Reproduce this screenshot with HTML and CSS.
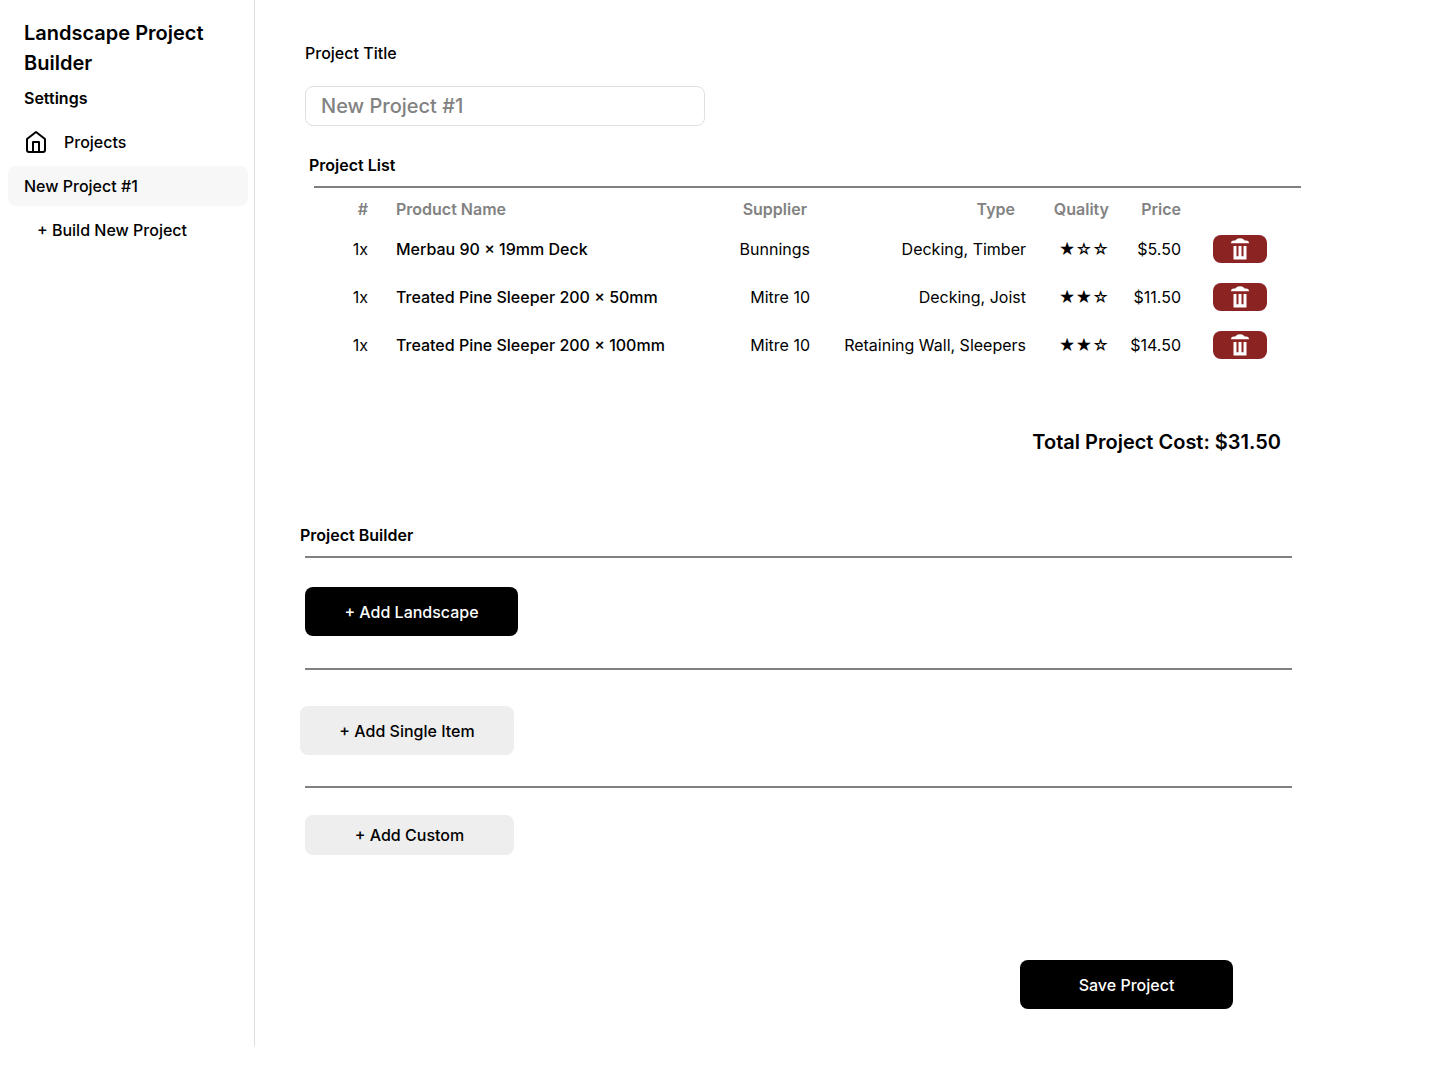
FILE: index.html
```html
<!DOCTYPE html>
<html lang="en">
<head>
<meta charset="utf-8">
<meta name="viewport" content="width=device-width, initial-scale=1">
<title>Landscape Project Builder</title>
<link rel="stylesheet" href="styles.css">
</head>
<body>
<svg class="sprite" aria-hidden="true">
  <symbol id="trash" viewBox="0 0 18 22">
    <path d="M0 5.200Q0 2.400 3 2.400H4.400Q5.600 0.300 9 0.300T13.600 2.400H15Q18 2.400 18 5.200Z"/>
    <path d="M2.500 8H5.500V18.200H7.500V8H10.500V18.200H12.500V8H15.500V21.500H2.500Z"/>
  </symbol>
</svg>
<div class="app">
  <nav class="sidebar">
    <h1 class="brand">Landscape Project Builder</h1>
    <h2 class="sidebar-heading">Settings</h2>
    <ul class="nav">
      <li><a class="nav-link" href="#projects">
        <svg class="nav-icon" viewBox="0 0 24 24" aria-hidden="true">
          <path d="M3 9l9-7 9 7v11a2 2 0 0 1-2 2H5a2 2 0 0 1-2-2z"/>
          <path d="M9 22V12h6v10"/>
        </svg>
        Projects</a></li>
      <li><a class="nav-link nav-link-active" href="#new-project">New Project #1</a></li>
      <li><a class="nav-link nav-link-nested" href="#build">+ Build New Project</a></li>
    </ul>
  </nav>

  <main class="main">
    <div class="field">
      <label class="field-label" for="title">Project Title</label>
      <input class="field-input" id="title" type="text" placeholder="New Project #1">
    </div>

    <section class="list">
      <h2 class="section-heading">Project List</h2>
      <div class="list-body">
        <table class="products">
          <colgroup>
            <col class="col-count"><col class="col-name"><col class="col-supplier"><col class="col-type"><col class="col-quality"><col class="col-price"><col class="col-action">
          </colgroup>
          <thead>
            <tr>
              <th scope="col">#</th>
              <th scope="col" class="name">Product Name</th>
              <th scope="col" class="head-supplier">Supplier</th>
              <th scope="col" class="head-type">Type</th>
              <th scope="col">Quality</th>
              <th scope="col">Price</th>
              <td></td>
            </tr>
          </thead>
          <tbody>
            <tr>
              <td>1x</td><td class="name">Merbau 90 × 19mm Deck</td><td>Bunnings</td><td>Decking, Timber</td><td>★☆☆</td><td>$5.50</td>
              <td class="action"><button class="delete" type="button" aria-label="Delete"><svg class="delete-icon"><use href="#trash"/></svg></button></td>
            </tr>
            <tr>
              <td>1x</td><td class="name">Treated Pine Sleeper 200 × 50mm</td><td>Mitre 10</td><td>Decking, Joist</td><td>★★☆</td><td>$11.50</td>
              <td class="action"><button class="delete" type="button" aria-label="Delete"><svg class="delete-icon"><use href="#trash"/></svg></button></td>
            </tr>
            <tr>
              <td>1x</td><td class="name">Treated Pine Sleeper 200 × 100mm</td><td>Mitre 10</td><td>Retaining Wall, Sleepers</td><td>★★☆</td><td>$14.50</td>
              <td class="action"><button class="delete" type="button" aria-label="Delete"><svg class="delete-icon"><use href="#trash"/></svg></button></td>
            </tr>
          </tbody>
        </table>
        <p class="total">Total Project Cost: $31.50</p>
      </div>
    </section>

    <section class="builder">
      <h2 class="section-heading">Project Builder</h2>
      <div class="step step-landscape">
        <button class="button button-primary" type="button">+ Add Landscape</button>
      </div>
      <div class="step step-item">
        <button class="button button-wide" type="button">+ Add Single Item</button>
      </div>
      <div class="step step-custom">
        <button class="button button-small" type="button">+ Add Custom</button>
      </div>
    </section>

    <div class="footer">
      <button class="button button-primary" type="button">Save Project</button>
    </div>
  </main>
</div>
</body>
</html>
```
FILE: styles.css
```css
* {
  box-sizing: border-box;
}

body {
  margin: 0;
  background: #fff;
  color: #000;
  font: 500 16px/24px Inter, "Liberation Sans", sans-serif;
}

h1, h2, p, ul {
  margin: 0;
  padding: 0;
}

button, input {
  font: inherit;
  color: inherit;
}

.sprite {
  display: none;
}

.app {
  display: flex;
  min-height: 100vh;
  padding-bottom: 34px;
}

/* Sidebar */
.sidebar {
  flex: 0 0 255px;
  padding: 18px 6px 0 8px;
  border-right: 1px solid #dfdfdf;
}

.brand {
  padding: 0 16px;
  font-size: 20px;
  line-height: 30px;
  font-weight: 600;
}

.sidebar-heading {
  margin: 8px 0 12px;
  padding: 0 16px;
  font-size: 16px;
  font-weight: 600;
}

.nav {
  display: grid;
  gap: 4px;
  list-style: none;
}

.nav-link {
  display: flex;
  align-items: center;
  gap: 16px;
  height: 40px;
  padding: 0 16px;
  border-radius: 8px;
  color: inherit;
  text-decoration: none;
}

.nav-link-active {
  background: #f7f7f7;
}

.nav-link-nested {
  padding-left: 29px;
}

.nav-icon {
  width: 24px;
  height: 24px;
  fill: none;
  stroke: #000;
  stroke-width: 2;
  stroke-linecap: round;
  stroke-linejoin: round;
}

/* Main column */
.main {
  flex: 1;
  min-width: 0;
  padding-top: 41px;
}

.field {
  display: flex;
  flex-direction: column;
  align-items: flex-start;
  gap: 21px;
  padding-left: 50px;
}

.field-input {
  width: 400px;
  height: 40px;
  padding: 0 15px;
  border: 1px solid #e0e0e0;
  border-radius: 8px;
  background: #fff;
  font-size: 20px;
}

.field-input::placeholder {
  color: #828282;
  opacity: 1;
}

.section-heading {
  font-size: 16px;
  font-weight: 600;
}

/* Product list */
.list {
  margin: 27px 139px 0 54px;
}

.list-body {
  margin: 9px 0 0 5px;
  border-top: 2px solid #808080;
}

.products {
  width: 100%;
  table-layout: fixed;
  border-collapse: collapse;
  text-align: right;
  white-space: nowrap;
}

.products th,
.products td {
  height: 48px;
  padding: 0;
  font-weight: 400;
}

.products thead th,
.products thead td {
  height: 37px;
  padding-top: 5px;
  color: #828282;
  font-weight: 600;
}

.products .name {
  padding-left: 28px;
  text-align: left;
}

.products td.name {
  font-weight: 500;
}

.products .head-supplier {
  padding-right: 3px;
}

.products .head-type {
  padding-right: 11px;
}

.products .action {
  padding-left: 32px;
  text-align: left;
}

.col-count { width: 54px; }
.col-supplier { width: 110px; }
.col-type { width: 216px; }
.col-quality { width: 83px; }
.col-price { width: 72px; }
.col-action { width: 120px; }

.delete {
  display: flex;
  align-items: center;
  justify-content: center;
  width: 54px;
  height: 28px;
  padding: 0;
  border: 0;
  border-radius: 8px;
  background: #8b2323;
}

.delete-icon {
  width: 18px;
  height: 22px;
  fill: #fff;
}

.total {
  margin-top: 58px;
  padding-right: 20px;
  font-size: 20px;
  line-height: 30px;
  font-weight: 600;
  text-align: right;
}

/* Builder */
.builder {
  margin: 66px 148px 0 45px;
}

.step {
  margin-left: 5px;
  border-top: 2px solid #808080;
}

.step-landscape {
  margin-top: 9px;
  padding: 29px 0 32px;
}

.step-item {
  padding: 36px 0 31px;
}

.step-custom {
  padding-top: 27px;
}

.button {
  display: block;
  width: 213px;
  height: 49px;
  padding: 0;
  border: 0;
  border-radius: 8px;
  background: #eee;
}

.button-primary {
  background: #000;
  color: #fff;
}

.button-wide {
  width: 214px;
  margin-left: -5px;
}

.button-small {
  width: 209px;
  height: 40px;
}

.footer {
  display: flex;
  justify-content: flex-end;
  margin-top: 105px;
  padding-right: 207px;
}
```
